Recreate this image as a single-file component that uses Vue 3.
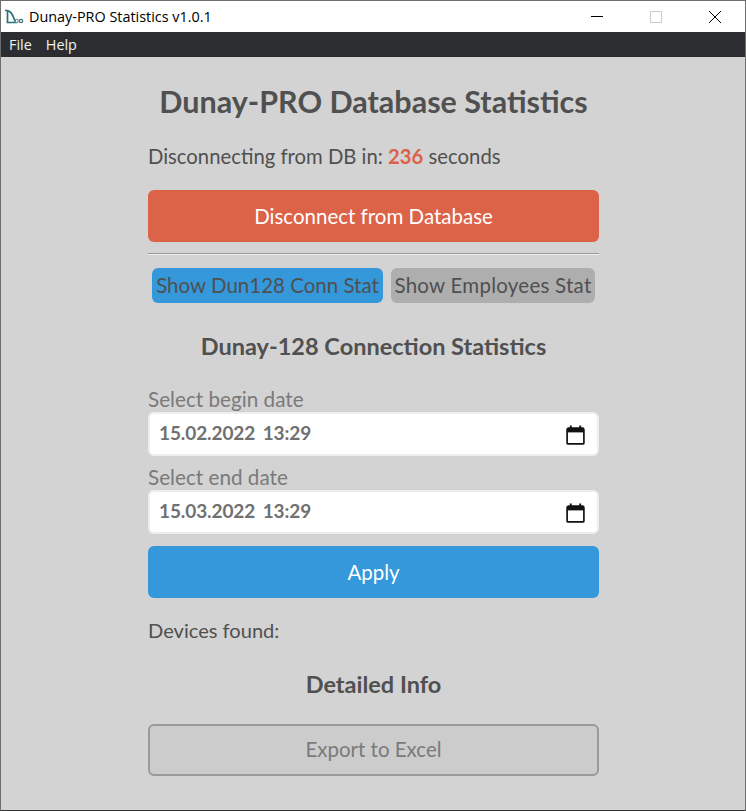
<script setup>
const menus = ['File', 'Help']
const dates = [
  { label: 'Select begin date', value: '15.02.2022 13:29' },
  { label: 'Select end date', value: '15.03.2022 13:29' }
]
</script>

<template>
  <div class="window">
    <header class="titlebar">
      <svg class="logo" width="20" height="18" viewBox="0 0 20 18" fill="none">
        <path d="M1 2.5H3.5V14 M3.5 2.5C8 3.5 9.5 9 11.5 14.5H2.5" stroke="#2f7078" stroke-width="1.7"/>
        <circle cx="12.5" cy="13" r="1.7" stroke="#5d8f96" stroke-width="1.1"/>
        <circle cx="17" cy="13" r="1.7" stroke="#3f6f76" stroke-width="1.2"/>
      </svg>
      <span class="title">Dunay-PRO Statistics v1.0.1</span>
      <div class="controls">
        <span class="ctl"><svg width="12" height="12" viewBox="0 0 12 12"><path d="M0 5.5H12" stroke="#000"/></svg></span>
        <span class="ctl"><svg width="12" height="12" viewBox="0 0 12 12"><rect x=".5" y=".5" width="11" height="11" fill="none" stroke="#ccc"/></svg></span>
        <span class="ctl"><svg width="12" height="12" viewBox="0 0 12 12"><path d="M0 0L12 12M12 0L0 12" stroke="#000"/></svg></span>
      </div>
    </header>
    <nav class="menubar">
      <span v-for="m in menus" :key="m">{{ m }}</span>
    </nav>
    <main class="content">
      <section class="col">
        <h1>Dunay-PRO Database Statistics</h1>
        <p class="count">Disconnecting from DB in: <b>236</b> seconds</p>
        <button class="btn red">Disconnect from Database</button>
        <hr />
        <div class="tabs">
          <button class="tab blue">Show Dun128 Conn Stat</button>
          <button class="tab gray">Show Employees Stat</button>
        </div>
        <h2>Dunay-128 Connection Statistics</h2>
        <div class="dates">
          <label v-for="d in dates" :key="d.label" class="field">
            <span class="lab">{{ d.label }}</span>
            <span class="input">
              <span class="val">{{ d.value }}</span>
              <svg class="cal" width="19" height="21" viewBox="0 0 18 20" fill="none">
                <path d="M1 5.5a1.5 1.5 0 0 1 1.5-1.5h13A1.5 1.5 0 0 1 17 5.5V18a1 1 0 0 1-1 1H2a1 1 0 0 1-1-1Z" stroke="#111" stroke-width="1.6"/>
                <path d="M1 4h16v4H1Z" fill="#111"/>
                <path d="M4.5 1.5V4M13.5 1.5V4" stroke="#111" stroke-width="1.8"/>
              </svg>
            </span>
          </label>
        </div>
        <button class="btn blue apply">Apply</button>
        <p class="found">Devices found:</p>
        <h2 class="detail">Detailed Info</h2>
        <button class="btn export">Export to Excel</button>
      </section>
    </main>
  </div>
</template>

<style>
html, body { margin: 0; padding: 0; }
</style>

<style scoped>
.window {
  width: 746px;
  height: 811px;
  box-sizing: border-box;
  border: 1px solid #6e6e6e;
  border-bottom-color: #333;
  display: flex;
  flex-direction: column;
  overflow: hidden;
  background: #d3d3d3;
  font-family: Lato, "Noto Sans", sans-serif;
}
.titlebar {
  height: 31px;
  flex: none;
  background: #fff;
  display: flex;
  align-items: center;
  padding-left: 3px;
  color: #000;
  font: 14.4px "Open Sans", sans-serif;
}
.logo { margin-right: 5px; }
.controls { margin-left: auto; display: flex; }
.ctl {
  width: 60px;
  margin-left: -1px;
  height: 31px;
  display: flex;
  align-items: center;
  justify-content: center;
}
.menubar {
  height: 25px;
  flex: none;
  background: #2b2d30;
  color: #f2f2f2;
  display: flex;
  gap: 14px;
  align-items: center;
  padding-left: 8px;
  font: 14.4px "Open Sans", sans-serif;
}
.content { flex: 1; display: flex; justify-content: center; }
.col {
  width: 451px;
  margin-left: 1px;
  color: #505050;
  display: flex;
  flex-direction: column;
}
h1 {
  margin: 24px 0 0;
  height: 40px;
  font-size: 30.5px;
  line-height: 40px;
  font-weight: 700;
  text-align: center;
  color: #505050;
}
.count {
  margin: 21px 0 0;
  font-size: 20.3px;
  line-height: 28px;
}
.count b { color: #dc6248; font-weight: 700; }
button {
  font-family: inherit;
  border: 0;
  cursor: pointer;
  padding: 0;
}
.btn {
  width: 451px;
  height: 52px;
  border-radius: 6px;
  font-size: 20.5px;
  color: #fff;
}
.red { background: #dc6248; margin-top: 20px; }
.blue { background: #3498db; }
hr {
  width: 100%;
  margin: 11px 0 0;
  border: 0;
  border-top: 1px solid #999;
  border-bottom: 1px solid #eee;
}
.tabs {
  display: flex;
  gap: 8px;
  justify-content: center;
  margin-top: 13px;
}
.tab {
  height: 35px;
  border-radius: 6px;
  font-size: 20.5px;
  color: #505050;
  padding: 0 3px 2px;
  white-space: nowrap;
}
.tab.blue { width: 231px; }
.tab.gray { width: 204px; background: #aeaeae; letter-spacing: 0.25px; }
h2 {
  margin: 27px 0 0;
  font-size: 23.5px;
  line-height: 32px;
  font-weight: 700;
  text-align: center;
  color: #505050;
}
.dates { margin-top: 24px; display: flex; flex-direction: column; gap: 8px; }
.field { display: flex; flex-direction: column; }
.lab { font-size: 20.7px; line-height: 26px; color: #7a7a7a; }
.input {
  height: 44px;
  box-sizing: border-box;
  background: #fff;
  border: 2px solid #eee;
  border-radius: 6px;
  padding: 0 12px 0 9px;
  display: flex;
  align-items: center;
  justify-content: space-between;
  font-size: 19px;
  font-weight: 700;
  color: #707070;
}
.val { word-spacing: 3px; letter-spacing: -0.1px; padding-bottom: 3px; }
.apply { margin-top: 12px; }
.found { margin: 18px 0 1px; font-size: 20.1px; line-height: 28px; }
.detail { margin-top: 23px; }
.export {
  margin-top: 24px;
  box-sizing: border-box;
  background: #cccccc;
  border: 2px solid #9a9a9a;
  color: #7a7a7a;
  padding-bottom: 2px;
}
</style>
